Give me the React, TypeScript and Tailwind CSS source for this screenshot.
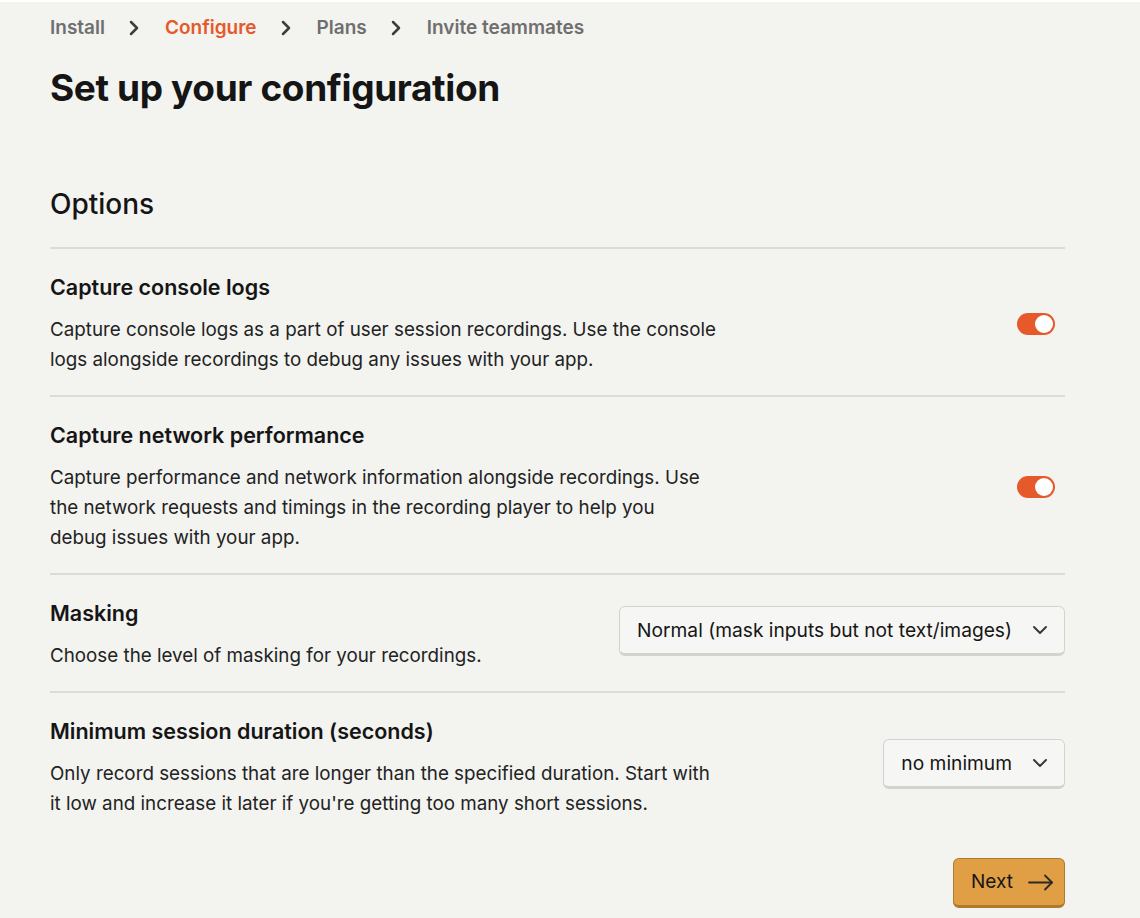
import { ChevronRight, ChevronDown } from 'lucide-react';

type Option = {
  title: string;
  description: string;
  control: 'toggle' | 'select';
  value?: string;
  narrow?: boolean;
};

const steps = ['Install', 'Configure', 'Plans', 'Invite teammates'];

const options: Option[] = [
  {
    title: 'Capture console logs',
    description:
      'Capture console logs as a part of user session recordings. Use the console logs alongside recordings to debug any issues with your app.',
    control: 'toggle',
  },
  {
    title: 'Capture network performance',
    description:
      'Capture performance and network information alongside recordings. Use the network requests and timings in the recording player to help you debug issues with your app.',
    control: 'toggle',
    narrow: true,
  },
  {
    title: 'Masking',
    description: 'Choose the level of masking for your recordings.',
    control: 'select',
    value: 'Normal (mask inputs but not text/images)',
  },
  {
    title: 'Minimum session duration (seconds)',
    description:
      "Only record sessions that are longer than the specified duration. Start with it low and increase it later if you're getting too many short sessions.",
    control: 'select',
    value: 'no minimum',
  },
];

function Toggle() {
  return (
    <div className="flex h-[22px] w-[38px] items-center justify-end rounded-full bg-[#e5592b] px-[2px]">
      <div className="h-[18px] w-[18px] rounded-full bg-white" />
    </div>
  );
}

function Select({ value }: { value: string }) {
  return (
    <button className="flex h-[50px] items-center gap-4 rounded-md border border-b-[3px] border-[#d3d3ce] bg-[#f6f6f4] pl-[17px] pr-[12px] text-[19.2px] text-[#151515]">
      <span>{value}</span>
      <ChevronDown className="h-6 w-6 text-[#3a3a3a]" strokeWidth={2} />
    </button>
  );
}

export default function App() {
  return (
    <div className="min-h-[918px] bg-[#f3f3f0] font-['Inter',sans-serif] text-[#151515]">
      <div className="ml-[50px] w-[1015px]">
        {/* Breadcrumb */}
        <nav className="mt-[2px] flex h-[52px] items-center text-[19px] font-semibold text-[#6f6f6f]">
          {steps.map((step, i) => (
            <div key={step} className="flex items-center">
              <span className={i === 1 ? 'text-[#e5592b]' : ''}>{step}</span>
              {i < steps.length - 1 && (
                <ChevronRight className="ml-[17px] mr-[19px] h-6 w-6 text-[#3d3d3d]" strokeWidth={2.5} />
              )}
            </div>
          ))}
        </nav>

        <h1 className="mt-[12px] text-[37px] font-bold leading-[44px] tracking-[-0.01em]">
          Set up your configuration
        </h1>

        <h2 className="mt-[76px] text-[28px] font-medium leading-[36px]">Options</h2>

        <div className="mt-[25px]">
          {options.map((opt) => (
            <div
              key={opt.title}
              className="flex items-center justify-between border-t-2 border-[#dcdcd6] pt-[24px] pb-[20px]"
            >
              <div className={opt.narrow ? 'max-w-[660px]' : 'max-w-[672px]'}>
                <h3 className="text-[21.5px] font-semibold leading-[28px]">{opt.title}</h3>
                <p className="mt-[14px] text-[18.8px] leading-[30px] text-[#222]">{opt.description}</p>
              </div>
              <div className={opt.control === 'toggle' ? 'pr-[10px]' : 'mb-2'}>
                {opt.control === 'toggle' ? <Toggle /> : <Select value={opt.value!} />}
              </div>
            </div>
          ))}
        </div>

        <div className="mt-[19px] flex justify-end">
          <button className="flex h-[50px] w-[112px] items-center gap-[15px] rounded-md border border-b-[3px] border-[#b07a2c] bg-[#e09f45] pl-[17px] text-[19px] text-[#151515]">
            Next
            <svg width="26" height="17" viewBox="0 0 26 17" fill="none" stroke="#2d2a25" strokeWidth="1.8" strokeLinecap="round" strokeLinejoin="round">
              <path d="M1 8.5h23" />
              <path d="M17 1.5l7 7-7 7" />
            </svg>
          </button>
        </div>
      </div>
    </div>
  );
}
